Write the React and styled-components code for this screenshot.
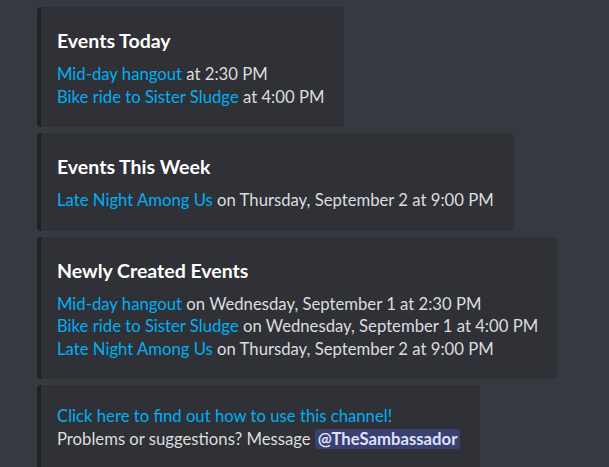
import React from "react";
import styled, { createGlobalStyle } from "styled-components";

const GlobalStyle = createGlobalStyle`
  html, body {
    margin: 0;
    padding: 0;
    background: #36393f;
  }
  body {
    font-family: Lato, "Open Sans", "Noto Sans", sans-serif;
    color: #dcddde;
    overflow: hidden;
  }
`;

const sections = [
  {
    title: "Events Today",
    events: [
      { name: "Mid-day hangout", when: "at 2:30 PM" },
      { name: "Bike ride to Sister Sludge", when: "at 4:00 PM" },
    ],
  },
  {
    title: "Events This Week",
    events: [
      { name: "Late Night Among Us", when: "on Thursday, September 2 at 9:00 PM" },
    ],
  },
  {
    title: "Newly Created Events",
    events: [
      { name: "Mid-day hangout", when: "on Wednesday, September 1 at 2:30 PM" },
      { name: "Bike ride to Sister Sludge", when: "on Wednesday, September 1 at 4:00 PM" },
      { name: "Late Night Among Us", when: "on Thursday, September 2 at 9:00 PM" },
    ],
  },
];

export default function App() {
  return (
    <>
      <GlobalStyle />
      <Feed>
        {sections.map((section, i) => (
          <Embed key={i}>
            <Title>{section.title}</Title>
            <Body>
              {section.events.map((ev, j) => (
                <Line key={j}>
                  <Link href="#">{ev.name}</Link> {ev.when}
                </Line>
              ))}
            </Body>
          </Embed>
        ))}
        <Embed $tall>
          <Body>
            <Line>
              <Link href="#">Click here to find out how to use this channel!</Link>
            </Line>
            <Line>
              Problems or suggestions? Message <Mention>@TheSambassador</Mention>
            </Line>
          </Body>
        </Embed>
      </Feed>
    </>
  );
}

const Feed = styled.div`
  display: flex;
  flex-direction: column;
  align-items: flex-start;
  gap: 6px;
  padding: 7px 0 0 37px;
`;

const Embed = styled.div`
  box-sizing: border-box;
  background: #2f3136;
  border-left: 4px solid #202225;
  border-radius: 4px;
  padding: ${(p) => (p.$tall ? "20px 20px 40px 16px" : "23px 20px 19px 16px")};
`;

const Title = styled.div`
  font-size: 19.5px;
  line-height: 22px;
  font-weight: 700;
  color: #ffffff;
  margin-bottom: 11px;
`;

const Body = styled.div`
  font-size: 16.7px;
  line-height: 22.5px;
`;

const Line = styled.div`
  white-space: nowrap;
`;

const Link = styled.a`
  color: #00aff4;
  text-decoration: none;
`;

const Mention = styled.span`
  background: rgba(88, 101, 242, 0.3);
  color: #dee0fc;
  font-weight: 700;
  padding: 0 3px;
  border-radius: 3px;
`;
